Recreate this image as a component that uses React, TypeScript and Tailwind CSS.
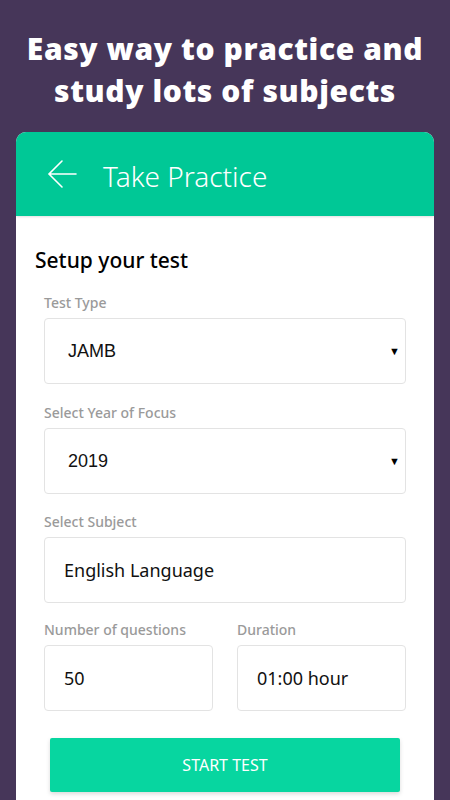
import React from 'react';

const font = { fontFamily: '"Open Sans", "Noto Sans", sans-serif' };

function Field({ label, value, arrow, className = '' }: { label: string; value: string; arrow?: boolean; className?: string }) {
  return (
    <div className={className}>
      <p className="h-[14px] text-[14px] leading-[14px] font-medium text-[#9a9a9a]" style={{ fontFamily: '"Noto Sans", sans-serif' }}>{label}</p>
      <div className={`mt-[8px] flex h-[66px] items-center justify-between rounded-[4px] border border-[#e3e3e3] bg-white pr-[5px] ${arrow ? 'pl-[23px]' : 'pl-[19px]'}`}>
        <span className="text-[18px] text-[#111]" style={{ fontFamily: arrow ? '"Liberation Sans", sans-serif' : '"Noto Sans", sans-serif' }}>{value}</span>
        {arrow && <span className="text-[11px] text-black">▼</span>}
      </div>
    </div>
  );
}

export default function App() {
  return (
    <div className="h-[800px] w-[450px] overflow-hidden bg-[#463659]" style={font}>
      <h1 className="pt-[28px] text-center text-[30px] leading-[42px] font-extrabold tracking-[0.6px] text-white">
        Easy way to practice and
        <br />
        study lots of subjects
      </h1>

      <div className="mx-[16px] mt-[20px] h-[700px] overflow-hidden rounded-t-[10px] bg-white">
        <div className="flex h-[84px] items-center bg-[#00c896] shadow-[0_1px_2px_rgba(0,0,0,0.12)]">
          <svg className="ml-[31px]" width="30" height="30" viewBox="0 0 30 30" fill="none" stroke="white" strokeWidth="1.6" strokeLinecap="round">
            <path d="M2 15h27M15 2 2 15l13 13" />
          </svg>
          <span className="ml-[26px] mt-[4px] text-[28px] font-light text-white" style={{ fontFamily: '"Noto Sans", sans-serif' }}>Take Practice</span>
        </div>

        <div className="px-[28px] pt-[30px]">
          <h2 className="-ml-[9px] text-[21px] leading-[28px] font-medium text-black" style={{ fontFamily: '"Noto Sans", sans-serif' }}>Setup your test</h2>

          <Field className="mt-[22px]" label="Test Type" value="JAMB" arrow />
          <Field className="mt-[22px]" label="Select Year of Focus" value="2019" arrow />
          <Field className="mt-[21px]" label="Select Subject" value="English Language" />

          <div className="mt-[20px] grid grid-cols-2 gap-[24px]">
            <Field label="Number of questions" value="50" />
            <Field label="Duration" value="01:00 hour" />
          </div>

          <button type="button" className="mx-[6px] mt-[27px] flex h-[54px] w-[350px] items-center justify-center rounded-[2px] bg-[#07d6a0] text-[16px] text-white shadow-[0_2px_4px_rgba(0,0,0,0.15)]" style={{ fontFamily: '"Noto Sans", sans-serif' }}>
            START TEST
          </button>
        </div>
      </div>
    </div>
  );
}
